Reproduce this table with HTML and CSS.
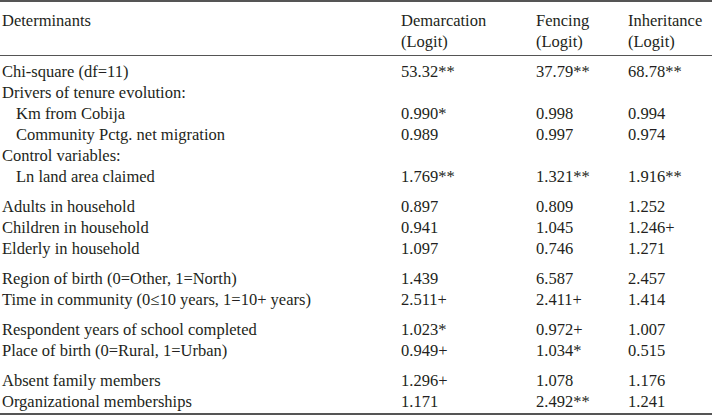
FILE: index.html
```html
<!DOCTYPE html>
<html lang="en">
<head>
<meta charset="utf-8">
<title>Determinants table</title>
<link rel="stylesheet" href="styles.css">
</head>
<body>
<div class="tbl">
  <div class="head">
    <div class="row hrow">
      <div class="c1">Determinants</div>
      <div>Demarcation<br>(Logit)</div>
      <div>Fencing<br>(Logit)</div>
      <div>Inheritance<br>(Logit)</div>
    </div>
  </div>
  <div class="body">
    <div class="group">
      <div class="row"><div class="c1">Chi-square (df=11)</div><div>53.32**</div><div>37.79**</div><div>68.78**</div></div>
      <div class="row"><div class="c1">Drivers of tenure evolution:</div><div></div><div></div><div></div></div>
      <div class="row"><div class="c1 ind">Km from Cobija</div><div>0.990*</div><div>0.998</div><div>0.994</div></div>
      <div class="row"><div class="c1 ind">Community Pctg. net migration</div><div>0.989</div><div>0.997</div><div>0.974</div></div>
      <div class="row"><div class="c1">Control variables:</div><div></div><div></div><div></div></div>
      <div class="row"><div class="c1 ind">Ln land area claimed</div><div>1.769**</div><div>1.321**</div><div>1.916**</div></div>
    </div>
    <div class="group">
      <div class="row"><div class="c1">Adults in household</div><div>0.897</div><div>0.809</div><div>1.252</div></div>
      <div class="row"><div class="c1">Children in household</div><div>0.941</div><div>1.045</div><div>1.246+</div></div>
      <div class="row"><div class="c1">Elderly in household</div><div>1.097</div><div>0.746</div><div>1.271</div></div>
    </div>
    <div class="group">
      <div class="row"><div class="c1">Region of birth (0=Other, 1=North)</div><div>1.439</div><div>6.587</div><div>2.457</div></div>
      <div class="row"><div class="c1">Time in community (0≤10 years, 1=10+ years)</div><div>2.511+</div><div>2.411+</div><div>1.414</div></div>
    </div>
    <div class="group">
      <div class="row"><div class="c1">Respondent years of school completed</div><div>1.023*</div><div>0.972+</div><div>1.007</div></div>
      <div class="row"><div class="c1">Place of birth (0=Rural, 1=Urban)</div><div>0.949+</div><div>1.034*</div><div>0.515</div></div>
    </div>
    <div class="group">
      <div class="row"><div class="c1">Absent family members</div><div>1.296+</div><div>1.078</div><div>1.176</div></div>
      <div class="row"><div class="c1">Organizational memberships</div><div>1.171</div><div>2.492**</div><div>1.241</div></div>
    </div>
  </div>
</div>
</body>
</html>
```
FILE: styles.css
```css
html, body {
  margin: 0;
  padding: 0;
  background: #ffffff;
}
body {
  font-family: "Liberation Serif", "Times New Roman", serif;
  font-size: 16.5px;
  color: #231f20;
}
.tbl {
  width: 712px;
  border-top: 2px solid #555555;
  border-bottom: 2px solid #555555;
}
.head {
  padding: 8px 0 3px;
  border-bottom: 1.5px solid #555555;
}
.row {
  display: grid;
  grid-template-columns: 399px 135px 92px 86px;
  padding-left: 2px;
  line-height: 21px;
  white-space: nowrap;
}
.hrow {
  height: 42px;
}
.body {
  padding: 5px 0 1px;
}
.group + .group {
  margin-top: 9px;
}
.ind {
  padding-left: 14px;
}
```
